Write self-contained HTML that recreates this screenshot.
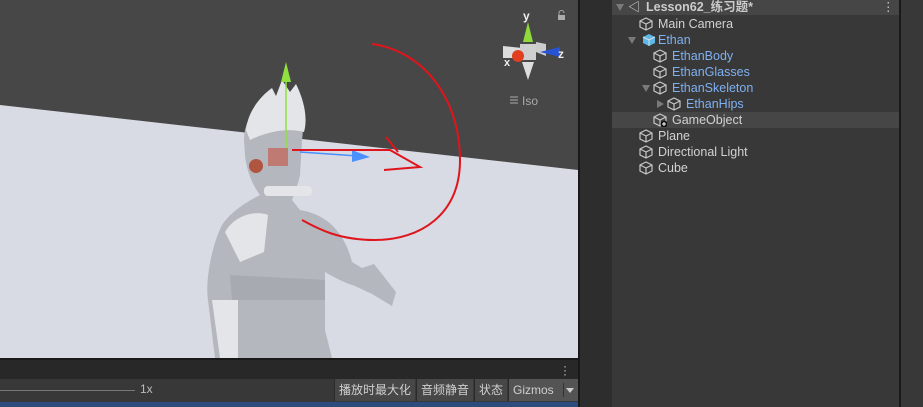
<!DOCTYPE html>
<html><head><meta charset="utf-8"><style>
*{margin:0;padding:0;box-sizing:border-box}
body{width:923px;height:407px;overflow:hidden;background:#383838;font-family:"Liberation Sans","Noto Sans CJK SC",sans-serif;position:relative}
.abs{position:absolute}
.row{position:absolute;left:612px;width:287px;height:16px;font-size:12.5px;color:#d2d2d2;line-height:17px;white-space:nowrap}
.blue{color:#7fb0f0}
.ic{position:absolute;top:1px;width:14px;height:14px}
.tri{position:absolute;top:5px;width:0;height:0;border-left:4px solid transparent;border-right:4px solid transparent;border-top:7px solid #7a7a7a}
.btn{position:absolute;top:379px;height:22px;background:#474747;color:#cfcfcf;font-size:12px;line-height:22px;padding:0 4px;border-left:1px solid #2a2a2a}
</style></head><body>
<svg class="abs" style="left:0;top:0" width="578" height="358">
<rect width="578" height="358" fill="#474747"/>
<polygon points="0,105 578,170 578,358 0,358" fill="#d8dbe3"/>
<g fill="#b4b7bd">
<path d="M244,140 C244,115 262,100 285,95 C300,105 305,120 302,140 L300,175 C298,185 295,192 292,200 L300,210 C330,215 345,235 352,262 L362,268 L374,264 L396,292 L392,306 L372,294 L355,286 C342,282 332,276 325,272 L325,330 L332,358 L215,358 L208,300 C205,280 212,245 222,225 C232,210 250,200 260,195 C252,185 246,168 245,155 Z"/>
</g>
<g fill="#e4e5e8">
<path d="M246,130 C248,110 262,95 272,88 L276,96 L282,80 L290,92 L296,84 C304,100 308,118 304,132 C290,128 270,130 250,140 Z"/>
<path d="M225,232 C235,215 255,210 268,215 L264,252 L240,262 Z"/>
<rect x="264" y="186" width="48" height="10" rx="4"/>
<path d="M212,300 L238,300 L238,358 L220,358 Z"/>
</g>
<path d="M230,275 L325,280 L325,300 L232,300 Z" fill="#9fa2a8" opacity=".6"/>
<line x1="286" y1="80" x2="286" y2="150" stroke="#8fe040" stroke-width="1.5"/>
<polygon points="281,82 291,82 286,62" fill="#8fe040"/>
<line x1="300" y1="152" x2="358" y2="156" stroke="#4a90ff" stroke-width="1.5"/>
<polygon points="352,150 370,157 352,162" fill="#4a90ff"/>
<rect x="268" y="148" width="20" height="18" fill="#c06a60" opacity=".8"/>
<circle cx="256" cy="166" r="7" fill="#b05540"/>
<g fill="none" stroke="#e0141c" stroke-width="2">
<path d="M372,44 C420,50 460,95 460,160 C460,215 420,240 375,240 C340,240 320,230 302,220"/>
<path d="M292,150 L390,150 L420,167 L384,170"/>
<path d="M386,137 L398,152"/>
</g>
<polygon points="523,42 533,42 528,22" fill="#8fd93a"/>
<polygon points="503,46 522,48 522,58 503,58" fill="#ddd"/>
<polygon points="522,62 534,62 528,80" fill="#ddd"/>
<polygon points="536,42 546,44 546,56 536,52" fill="#ccc"/>
<rect x="520" y="44" width="16" height="16" fill="#cfcfcf"/>
<polygon points="540,52 560,47 560,57" fill="#2653d6"/>
<circle cx="518" cy="56" r="6" fill="#e0401f"/>
<text x="523" y="20" fill="#eee" font-size="12" font-weight="bold" font-family="Liberation Sans">y</text>
<text x="558" y="58" fill="#eee" font-size="12" font-weight="bold" font-family="Liberation Sans">z</text>
<text x="504" y="66" fill="#eee" font-size="11" font-weight="bold" font-family="Liberation Sans">x</text>
<rect x="558" y="15" width="7" height="5" fill="#aaa"/>
<path d="M559,15 v-2 a2.5,2.5 0 0 1 5,0" fill="none" stroke="#aaa" stroke-width="1"/>
<g stroke="#aaa" stroke-width="1"><line x1="510" y1="97" x2="518" y2="97"/><line x1="510" y1="100" x2="518" y2="100"/><line x1="510" y1="103" x2="518" y2="103"/></g>
<text x="522" y="105" fill="#aaa" font-size="12" font-family="Liberation Sans">Iso</text>
</svg>
<div class="abs" style="left:0;top:358px;width:578px;height:2px;background:#191919"></div>
<div class="abs" style="left:0;top:360px;width:578px;height:19px;background:#282828"></div>
<div class="abs" style="left:563px;top:364px;color:#ccc;font-size:12px;line-height:4px;width:4px">·<br>·<br>·</div>
<div class="abs" style="left:0;top:379px;width:578px;height:23px;background:#383838"></div>
<div class="abs" style="left:0;top:390px;width:135px;height:1px;background:#777"></div>
<div class="abs" style="left:140px;top:382px;color:#bbb;font-size:12px">1x</div>
<div class="btn" style="left:334px">播放时最大化</div>
<div class="btn" style="left:416px">音频静音</div>
<div class="btn" style="left:474px">状态</div>
<div class="btn" style="left:508px;width:70px;background:#545454">Gizmos<span style="position:absolute;left:54px;top:4px;height:14px;border-left:1px solid #333"></span><span style="position:absolute;left:57px;top:9px;border-left:4px solid transparent;border-right:4px solid transparent;border-top:5px solid #ccc"></span></div>
<div class="abs" style="left:0;top:402px;width:578px;height:5px;background:#2c4c80"></div>
<div class="abs" style="left:578px;top:0;width:2px;height:407px;background:#191919"></div>
<div class="abs" style="left:580px;top:0;width:32px;height:407px;background:#2d2d2d"></div>
<div class="abs" style="left:899px;top:0;width:2px;height:407px;background:#191919"></div>
<div class="abs" style="left:612px;top:0;width:287px;height:15px;background:#464646"></div>
<div class="abs" style="left:612px;top:112px;width:287px;height:16px;background:#464646"></div>
<div class="row" style="top:-1px;font-weight:bold;color:#ccc"><span class="tri" style="left:4px"></span><span style="position:absolute;left:16px;font-size:12px">◁</span><span style="position:absolute;left:34px">Lesson62_练习题*</span><span style="position:absolute;left:270px;font-weight:normal">⋮</span></div>
<svg width="0" height="0" style="position:absolute"><defs><g id="cube"><path d="M7,1 L13,4 L13,10 L7,13 L1,10 L1,4 Z M1,4 L7,7 L13,4 M7,7 L7,13" fill="none" stroke="#c8c8c8" stroke-width="1.2"/></g></defs></svg>
<div class="row" style="top:16px"><svg class="ic" style="left:27px"><use href="#cube"/></svg><span style="position:absolute;left:46px">Main Camera</span></div>
<div class="row" style="top:32px"><span class="tri" style="left:16px"></span><svg class="ic" style="left:30px"><path d="M7,1 L13,4 L13,10 L7,13 L1,10 L1,4 Z" fill="#5cb8e8"/><path d="M1,4 L7,7 L13,4 M7,7 L7,13" stroke="#ddd" fill="none"/></svg><span class="blue" style="position:absolute;left:46px">Ethan</span></div>
<div class="row" style="top:48px"><svg class="ic" style="left:41px"><use href="#cube"/></svg><span class="blue" style="position:absolute;left:60px">EthanBody</span></div>
<div class="row" style="top:64px"><svg class="ic" style="left:41px"><use href="#cube"/></svg><span class="blue" style="position:absolute;left:60px">EthanGlasses</span></div>
<div class="row" style="top:80px"><span class="tri" style="left:30px"></span><svg class="ic" style="left:41px"><use href="#cube"/></svg><span class="blue" style="position:absolute;left:60px">EthanSkeleton</span></div>
<div class="row" style="top:96px"><span style="position:absolute;left:45px;top:4px;border-top:4px solid transparent;border-bottom:4px solid transparent;border-left:7px solid #7a7a7a"></span><svg class="ic" style="left:55px"><use href="#cube"/></svg><span class="blue" style="position:absolute;left:74px">EthanHips</span></div>
<div class="row" style="top:112px"><svg class="ic" style="left:41px"><use href="#cube"/><circle cx="11" cy="11" r="3.5" fill="#111"/><path d="M9,11h4M11,9v4" stroke="#fff"/></svg><span style="position:absolute;left:60px">GameObject</span></div>
<div class="row" style="top:128px"><svg class="ic" style="left:27px"><use href="#cube"/></svg><span style="position:absolute;left:46px">Plane</span></div>
<div class="row" style="top:144px"><svg class="ic" style="left:27px"><use href="#cube"/></svg><span style="position:absolute;left:46px">Directional Light</span></div>
<div class="row" style="top:160px"><svg class="ic" style="left:27px"><use href="#cube"/></svg><span style="position:absolute;left:46px">Cube</span></div>
</body></html>
